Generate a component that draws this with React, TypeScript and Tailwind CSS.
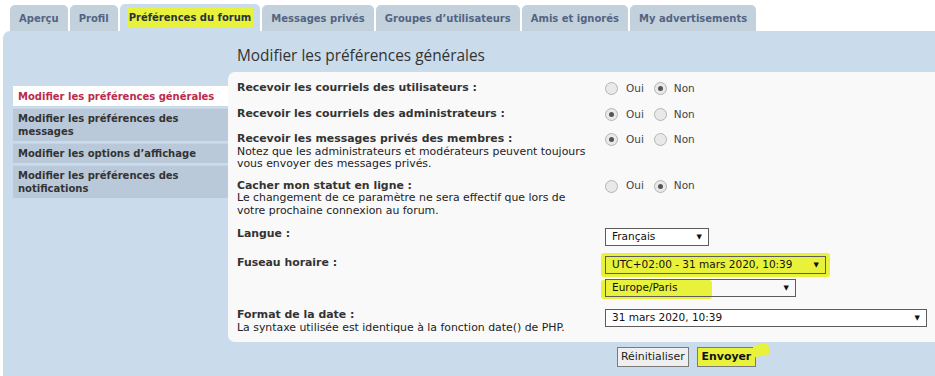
import React from "react";

const HL = "bg-[#e9f23a]";

const tabs = [
  "Aperçu",
  "Profil",
  "Préférences du forum",
  "Messages privés",
  "Groupes d’utilisateurs",
  "Amis et ignorés",
  "My advertisements",
];

const menu = [
  "Modifier les préférences générales",
  "Modifier les préférences des messages",
  "Modifier les options d’affichage",
  "Modifier les préférences des notifications",
];

function Radio({ checked }: { checked: boolean }) {
  return (
    <span className="w-[13px] h-[13px] rounded-full border border-[#b4b4b4] bg-[#e9e9e9] flex items-center justify-center shrink-0">
      {checked && <span className="w-[5px] h-[5px] rounded-full bg-[#555]" />}
    </span>
  );
}

function YesNo({ yes }: { yes: boolean }) {
  return (
    <div className="flex items-center h-[13px] text-[10.5px] text-[#444]">
      <Radio checked={yes} />
      <span className="ml-[8px] mr-[10px]">Oui</span>
      <Radio checked={!yes} />
      <span className="ml-[7px]">Non</span>
    </div>
  );
}

function Select({ value, w, hl }: { value: string; w: string; hl?: boolean }) {
  return (
    <div
      className={`${w} h-[18px] border border-[#5c5c5c] flex items-center justify-between pl-[6px] pr-[6px] text-[10.5px] text-[#111] ${
        hl ? HL : "bg-white"
      }`}
    >
      <span>{value}</span>
      <span className="text-[7px] leading-none">▼</span>
    </div>
  );
}

function Row({
  label,
  note,
  children,
  className,
}: {
  label: string;
  note?: string;
  children: React.ReactNode;
  className?: string;
}) {
  return (
    <div className={`flex ${className ?? ""}`}>
      <div className="w-[368px] pr-[8px] leading-[12.5px]">
        <div className="font-bold text-[10.9px] text-[#333]">{label}</div>
        {note && <div className="text-[10.9px] text-[#222]">{note}</div>}
      </div>
      <div>{children}</div>
    </div>
  );
}

export default function App() {
  return (
    <div
      className="w-[935px] h-[376px] overflow-hidden bg-white"
      style={{ fontFamily: '"DejaVu Sans", Verdana, sans-serif' }}
    >
      {/* onglets */}
      <div className="flex gap-[2px] pl-[10px] pt-[5px] h-[31px]">
        {tabs.map((t, i) => (
          <div
            key={t}
            className={`h-[26px] px-[9px] rounded-t-[5px] flex items-center text-[10px] font-bold ${
              i === 2 ? "bg-[#cadceb] text-[#28313f] h-[27px] -mt-[1px]" : "bg-[#c3d1dd] text-[#536482]"
            }`}
          >
            <span className={i === 2 ? `${HL} px-[2px] py-[3px] -mx-[2px]` : ""}>{t}</span>
          </div>
        ))}
      </div>

      {/* panneau */}
      <div className="ml-[3px] h-[345px] bg-[#cadceb] rounded-tl-[7px] flex">
        <div className="w-[215px] ml-[10px] mt-[55px] flex flex-col gap-[2px]">
          {menu.map((m, i) => (
            <div
              key={m}
              className={`px-[5px] py-[3px] text-[10px] font-bold leading-[13px] ${
                i === 0 ? "bg-white text-[#bc2a4d] border-t border-white" : "bg-[#b9c9d9] text-[#333] border-t border-[#c6d5e3]"
              }`}
            >
              {m}
            </div>
          ))}
        </div>

        <div className="flex-1 flex flex-col">
          <div
            className="pl-[9px] pt-[13px] h-[41px] text-[15.4px] text-[#333]"
            style={{ fontFamily: '"Open Sans", sans-serif' }}
          >
            Modifier les préférences générales
          </div>
          <div className="h-[270px] bg-[#f9f9f9] rounded-l-[7px] pl-[9px] pt-[10px]">
            <Row label="Recevoir les courriels des utilisateurs :">
              <YesNo yes={false} />
            </Row>
            <Row label="Recevoir les courriels des administrateurs :" className="mt-[13px]">
              <YesNo yes={true} />
            </Row>
            <Row
              label="Recevoir les messages privés des membres :"
              note="Notez que les administrateurs et modérateurs peuvent toujours vous envoyer des messages privés."
              className="mt-[12px]"
            >
              <YesNo yes={true} />
            </Row>
            <Row
              label="Cacher mon statut en ligne :"
              note="Le changement de ce paramètre ne sera effectif que lors de votre prochaine connexion au forum."
              className="mt-[9px]"
            >
              <YesNo yes={false} />
            </Row>
            <Row label="Langue :" className="mt-[11px]">
              <Select value="Français" w="w-[104px]" />
            </Row>
            <Row label="Fuseau horaire :" className="mt-[11px]">
              <div className="-mt-[1px] flex flex-col gap-[5px]">
                <div className={`${HL} -ml-[4px] px-[4px] py-[3px] -my-[3px] rounded-[3px]`}>
                  <Select value="UTC+02:00 - 31 mars 2020, 10:39" w="w-[221px]" hl />
                </div>
                <div className="relative w-[191px]">
                  <div className={`absolute -left-[4px] top-[1px] w-[111px] h-[19px] ${HL} rounded-[3px]`} />
                  <div className="relative">
                    <div className="w-[191px] h-[18px] border border-[#5c5c5c] flex items-center justify-between pl-[6px] pr-[6px] text-[10.5px] text-[#111]">
                      <span>Europe/Paris</span>
                      <span className="text-[7px] leading-none">▼</span>
                    </div>
                  </div>
                </div>
              </div>
            </Row>
            <Row
              label="Format de la date :"
              note="La syntaxe utilisée est identique à la fonction date() de PHP."
              className="mt-[12px]"
            >
              <Select value="31 mars 2020, 10:39" w="w-[322px]" />
            </Row>
          </div>
          <div className="flex gap-[8px] pl-[389px] mt-[5px] text-[10.9px]">
            <div className="h-[20px] px-[3px] border border-[#7a7a7a] bg-[#efefef] flex items-center text-[#222]">
              Réinitialiser
            </div>
            <div className={`relative h-[20px] px-[4px] border border-[#7a7a7a] ${HL} flex items-center font-bold text-[#111]`}>
              Envoyer
              <span className={`absolute -right-[14px] -top-[4px] w-[16px] h-[12px] ${HL} rounded-tr-[6px] -skew-y-12`} />
            </div>
          </div>
        </div>
      </div>
    </div>
  );
}
